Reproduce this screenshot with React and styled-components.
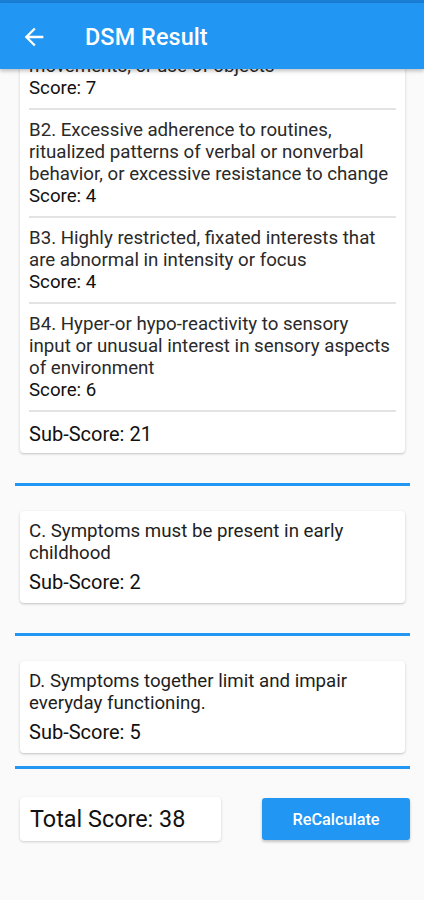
import React, { useLayoutEffect, useRef } from "react";
import styled, { createGlobalStyle } from "styled-components";

const Global = createGlobalStyle`
  html, body { margin: 0; padding: 0; background: #fafafa; }
  body { font-family: Roboto, "Noto Sans", sans-serif; }
  * { box-sizing: border-box; }
`;

const Screen = styled.div`
  width: 424px;
  height: 900px;
  display: flex;
  flex-direction: column;
  background: #fafafa;
  overflow: hidden;
`;

const StatusStrip = styled.div`
  height: 3px;
  background: #1a7fd6;
  flex: none;
`;

const AppBar = styled.header`
  flex: none;
  height: 66px;
  background: #2196f3;
  display: flex;
  align-items: center;
  padding-left: 20px;
  padding-top: 1px;
  gap: 37px;
  color: #fff;
  position: relative;
  z-index: 2;
  box-shadow: 0 2px 4px rgba(0, 0, 0, 0.25);
`;

const BackButton = styled.button`
  width: 28px;
  height: 28px;
  padding: 0;
  border: 0;
  background: transparent;
  color: #fff;
  display: flex;
  align-items: center;
  justify-content: center;
`;

const Title = styled.h1`
  margin: 0;
  font-size: 23.4px;
  font-weight: 500;
  letter-spacing: 0.1px;
`;

const Body = styled.main`
  flex: 1;
  overflow: hidden;
  padding: 0 14px 120px 15px;
`;

const Card = styled.section`
  background: #fff;
  margin: 0 5px;
  border-radius: 4px;
  box-shadow: 0 1px 3px rgba(0, 0, 0, 0.18), 0 1px 1px rgba(0, 0, 0, 0.06);
  padding: 9px 9px ${(p) => p.$bottom || 6}px;
`;

const Item = styled.div`
  font-size: 18.7px;
  line-height: 22px;
  color: #262626;
  padding-right: 4px;
`;

const Question = styled.div`
  color: #2a2a2a;
`;

const Score = styled.div`
  color: #111;
`;

const Divider = styled.hr`
  margin: 9px 0;
  border: 0;
  height: 2px;
  background: #e3e3e3;
`;

const SectionTitle = styled.div`
  font-size: 18.7px;
  line-height: 22px;
  color: #1e1e1e;
  padding-right: 4px;
`;

const SubScore = styled.div`
  font-size: 20px;
  line-height: 26px;
  color: #111;
  margin-top: ${(p) => p.$top || 0}px;
`;

const BlueRule = styled.div`
  height: 3px;
  background: #2196f3;
  margin-top: ${(p) => p.$above}px;
  margin-bottom: ${(p) => p.$below}px;
`;

const Footer = styled.div`
  display: flex;
  align-items: center;
  justify-content: space-between;
  padding-left: 5px;
`;

const TotalBox = styled.div`
  width: 201px;
  height: 44px;
  background: #fff;
  border-radius: 4px;
  box-shadow: 0 1px 3px rgba(0, 0, 0, 0.18);
  display: flex;
  align-items: center;
  padding-left: 10px;
  font-size: 23.4px;
  color: #111;
`;

const RecalcButton = styled.button`
  width: 148px;
  height: 42px;
  border: 0;
  border-radius: 3px;
  background: #2196f3;
  color: #fff;
  font-family: Roboto, sans-serif;
  font-size: 16.3px;
  font-weight: 500;
  box-shadow: 0 2px 3px rgba(0, 0, 0, 0.22);
`;

const ArrowBack = () => (
  <svg width="28" height="28" viewBox="0 0 24 24" fill="currentColor">
    <path d="M20 11H7.83l5.59-5.59L12 4l-8 8 8 8 1.41-1.41L7.83 13H20v-2z" />
  </svg>
);

const bItems = [
  {
    q: "B1. Stereotyped or repetitive motor movements, or use of objects",
    s: 7,
  },
  {
    q: "B2. Excessive adherence to routines, ritualized patterns of verbal or nonverbal behavior, or excessive resistance to change",
    s: 4,
  },
  {
    q: "B3. Highly restricted, fixated interests that are abnormal in intensity or focus",
    s: 4,
  },
  {
    q: "B4. Hyper-or hypo-reactivity to sensory input or unusual interest in sensory aspects of environment",
    s: 6,
  },
];

export default function App() {
  const bodyRef = useRef(null);
  const anchorRef = useRef(null);

  useLayoutEffect(() => {
    const body = bodyRef.current;
    const anchor = anchorRef.current;
    if (!body || !anchor) return;
    const bodyTop = body.getBoundingClientRect().top;
    const aTop = anchor.getBoundingClientRect().top;
    body.scrollTop = aTop - bodyTop - 8;
  }, []);

  return (
    <Screen>
      <Global />
      <StatusStrip />
      <AppBar>
        <BackButton aria-label="Back">
          <ArrowBack />
        </BackButton>
        <Title>DSM Result</Title>
      </AppBar>
      <Body ref={bodyRef}>
        <Card>
          <SectionTitle>
            B. Restricted, repetitive patterns of behavior, interests, or
            activities
          </SectionTitle>
          <Divider />
          {bItems.map((it, i) => (
            <React.Fragment key={it.q}>
              <Item>
                <Question>{it.q}</Question>
                <Score ref={i === 0 ? anchorRef : undefined}>
                  Score: {it.s}
                </Score>
              </Item>
              <Divider />
            </React.Fragment>
          ))}
          <SubScore>Sub-Score: 21</SubScore>
        </Card>
        <BlueRule $above={30} $below={25} />
        <Card $bottom={8}>
          <SectionTitle>
            C. Symptoms must be present in early childhood
          </SectionTitle>
          <SubScore $top={5}>Sub-Score: 2</SubScore>
        </Card>
        <BlueRule $above={30} $below={25} />
        <Card $bottom={8}>
          <SectionTitle>
            D. Symptoms together limit and impair everyday functioning.
          </SectionTitle>
          <SubScore $top={5}>Sub-Score: 5</SubScore>
        </Card>
        <BlueRule $above={13} $below={28} />
        <Footer>
          <TotalBox>Total Score: 38</TotalBox>
          <RecalcButton>ReCalculate</RecalcButton>
        </Footer>
      </Body>
    </Screen>
  );
}
